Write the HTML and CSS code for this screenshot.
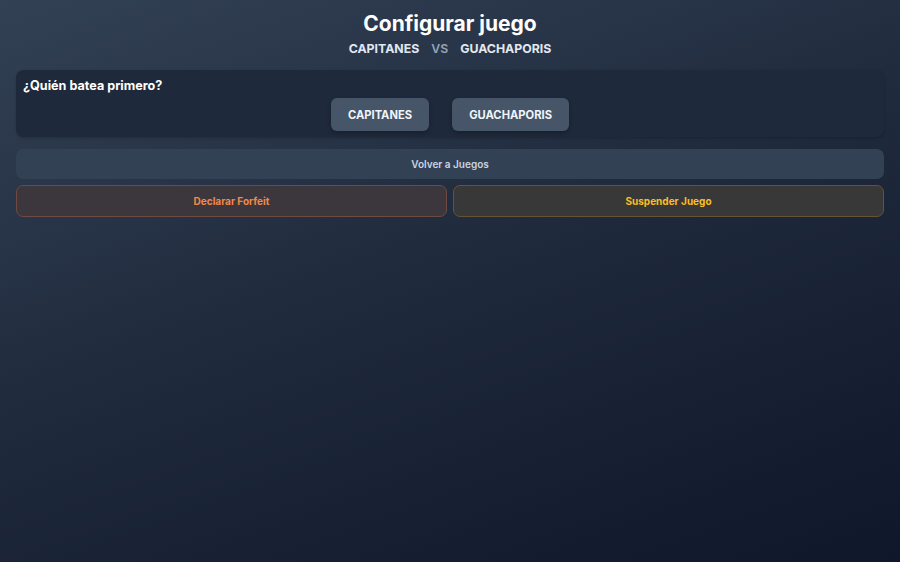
FILE: index.html
```html
<!DOCTYPE html>
<html lang="es">
<head>
    <meta charset="UTF-8">
    <meta name="viewport" content="width=device-width, initial-scale=1.0">
    <title>Configurar juego</title>
    <link rel="stylesheet" href="styles.css">
</head>
<body>
    <div class="container">
        <header class="header">
            <h1>Configurar juego</h1>
            <div class="matchup">
                <span class="team">CAPITANES</span>
                <span class="vs">VS</span>
                <span class="team">GUACHAPORIS</span>
            </div>
        </header>

        <section class="card">
            <h2>¿Quién batea primero?</h2>
            <div class="team-choice">
                <button class="team-btn">CAPITANES</button>
                <button class="team-btn">GUACHAPORIS</button>
            </div>
        </section>

        <button class="back-btn">Volver a Juegos</button>

        <div class="actions">
            <button class="action-btn forfeit">Declarar Forfeit</button>
            <button class="action-btn suspend">Suspender Juego</button>
        </div>
    </div>
</body>
</html>
```

FILE: styles.css
```css
* {
    margin: 0;
    padding: 0;
    box-sizing: border-box;
}

html, body {
    height: 100%;
}

body {
    font-family: Inter, 'Noto Sans', sans-serif;
    background: linear-gradient(160deg, #334155 0%, #1e293b 50%, #0f172a 100%);
    color: #f1f5f9;
    padding: 12px 16px;
}

.container {
    display: flex;
    flex-direction: column;
}

.header {
    text-align: center;
    margin-bottom: 13px;
}

h1 {
    font-size: 21px;
    font-weight: 700;
    color: #ffffff;
    line-height: 24px;
}

.matchup {
    display: flex;
    justify-content: center;
    gap: 12px;
    margin-top: 5px;
    font-size: 12.3px;
    font-weight: 700;
    line-height: 16px;
}

.team {
    color: #e2e8f0;
}

.vs {
    color: #94a3b8;
    font-weight: 600;
}

.card {
    background-color: #1e293b;
    border-radius: 8px;
    padding: 8px 7px 6px;
    box-shadow: 0 1px 3px rgba(0, 0, 0, 0.2);
}

.card h2 {
    font-size: 12.6px;
    font-weight: 700;
    color: #ffffff;
    line-height: 16px;
}

.team-choice {
    display: flex;
    justify-content: center;
    gap: 23px;
    margin-top: 4px;
}

.team-btn {
    font-family: inherit;
    background-color: #475569;
    color: #f1f5f9;
    border: none;
    border-radius: 6px;
    padding: 0 17px;
    height: 33px;
    font-size: 11.2px;
    font-weight: 700;
    box-shadow: 0 2px 4px rgba(0, 0, 0, 0.25);
    cursor: pointer;
}

.back-btn {
    font-family: inherit;
    margin-top: 12px;
    height: 30px;
    background-color: #334155;
    color: #cbd5e1;
    border: none;
    border-radius: 7px;
    font-size: 10px;
    font-weight: 600;
    cursor: pointer;
}

.actions {
    display: flex;
    gap: 6px;
    margin-top: 6px;
}

.action-btn {
    font-family: inherit;
    flex: 1;
    height: 32px;
    border-radius: 7px;
    font-size: 10px;
    font-weight: 700;
    cursor: pointer;
}

.forfeit {
    background-color: #3c373d;
    border: 1px solid #6e4a40;
    color: #f0894a;
}

.suspend {
    background-color: #383838;
    border: 1px solid #635532;
    color: #fbbf24;
}
```
